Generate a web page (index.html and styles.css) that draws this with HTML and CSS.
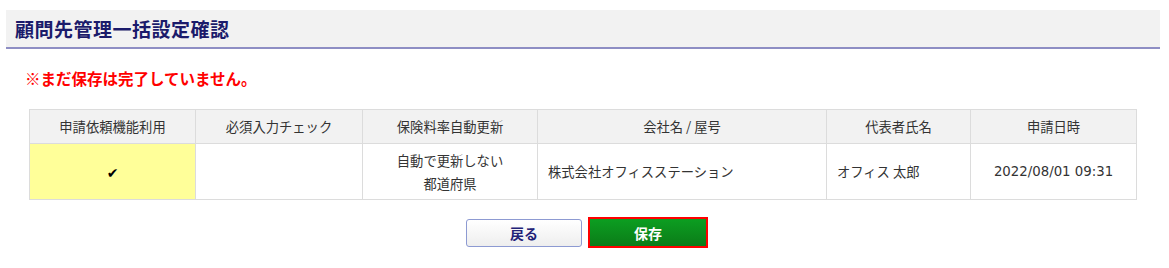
FILE: index.html
```html
<!DOCTYPE html>
<html lang="ja">
<head>
<meta charset="utf-8">
<link rel="stylesheet" href="styles.css">
</head>
<body>
<div class="page">
  <div class="page-header"><h1 class="page-title">顧問先管理一括設定確認</h1></div>
  <p class="warning">※まだ保存は完了していません。</p>
  <table class="confirm-table">
    <colgroup>
      <col style="width:166px"><col style="width:167px"><col style="width:175px"><col style="width:289px"><col style="width:144px"><col style="width:166px">
    </colgroup>
    <thead>
      <tr>
        <th>申請依頼機能利用</th>
        <th>必須入力チェック</th>
        <th>保険料率自動更新</th>
        <th>会社名 / 屋号</th>
        <th>代表者氏名</th>
        <th>申請日時</th>
      </tr>
    </thead>
    <tbody>
      <tr>
        <td class="center highlight"><span class="check">✔</span></td>
        <td class="center"></td>
        <td class="center">自動で更新しない<br>都道府県</td>
        <td class="left">株式会社オフィスステーション</td>
        <td class="left">オフィス 太郎</td>
        <td class="center date">2022/08/01 09:31</td>
      </tr>
    </tbody>
  </table>
  <div class="actions">
    <button class="btn btn-back" type="button">戻る</button>
    <button class="btn btn-save" type="button">保存</button>
  </div>
</div>
</body>
</html>
```
FILE: styles.css
```css
* { box-sizing: border-box; }
html, body { margin: 0; padding: 0; background: #fff; }
body {
  font-family: "Noto Sans CJK JP", "Noto Sans", sans-serif;
  color: #333;
}
.page { padding: 10px 9px 0 6px; }
.page-header {
  background: #f2f2f2;
  border-bottom: 2px solid #8e8ec4;
  height: 39px;
  display: flex;
  align-items: center;
  padding-left: 9px;
}
.page-title {
  margin: 0;
  font-size: 19px;
  font-weight: bold;
  color: #1b1b6b;
  letter-spacing: 0.5px;
}
.warning {
  margin: 18px 0 0 19px;
  color: #f00;
  font-weight: bold;
  font-size: 15.5px;
  line-height: 22px;
}
.confirm-table {
  margin: 20px 0 0 23px;
  border-collapse: collapse;
  table-layout: fixed;
  width: 1107px;
  font-size: 13.3px;
  color: #333;
}
.confirm-table th, .confirm-table td {
  border: 1px solid #dcdcdc;
  font-weight: normal;
}
.confirm-table th {
  background: #f2f2f2;
  height: 34px;
  text-align: center;
  padding: 0 4px;
}
.confirm-table td {
  height: 56px;
  padding: 0 10px;
  line-height: 23px;
  background: #fff;
}
.confirm-table td.center { text-align: center; }
.confirm-table td.left { text-align: left; }
.confirm-table td.date { font-family: "DejaVu Sans", sans-serif; font-size: 13.3px; }
.confirm-table td.highlight { background: #ffff99; padding-top: 2px; }
.check {
  font-family: "DejaVu Sans", sans-serif;
  font-size: 14px;
  color: #000;
}
.actions {
  display: flex;
  justify-content: center;
  align-items: center;
  gap: 6px;
  margin-top: 17px;
  padding-left: 8px;
}
.btn {
  font-family: "Noto Sans CJK JP", sans-serif;
  font-size: 14px;
  font-weight: bold;
  cursor: pointer;
}
.btn-back {
  width: 116px;
  height: 28px;
  border: 1px solid #8d9ad2;
  border-radius: 3px;
  background: linear-gradient(#ffffff, #eeeeee);
  color: #222277;
}
.btn-save {
  width: 120px;
  height: 31px;
  border: 2px solid #ff0000;
  padding: 0;
  background: linear-gradient(#0c9e21, #0b7c18);
  color: #fff;
  border-radius: 0;
}
```
